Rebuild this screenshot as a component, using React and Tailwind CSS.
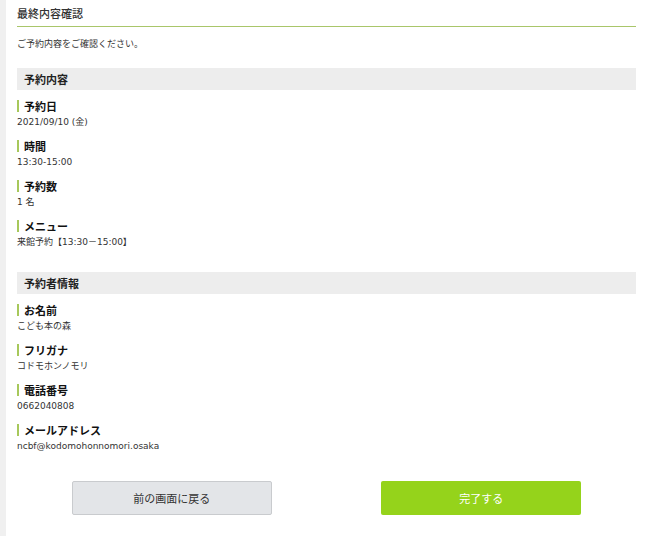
const font = { fontFamily: '"Noto Sans CJK JP", "Noto Sans", sans-serif' };
const valueFont = { fontFamily: '"DejaVu Sans", "Noto Sans CJK JP", sans-serif' };

const sections = [
  {
    title: '予約内容',
    fields: [
      ['予約日', '2021/09/10 (金)'],
      ['時間', '13:30-15:00'],
      ['予約数', '1 名'],
      ['メニュー', '来館予約【13:30－15:00】'],
    ],
  },
  {
    title: '予約者情報',
    fields: [
      ['お名前', 'こども本の森'],
      ['フリガナ', 'コドモホンノモリ'],
      ['電話番号', '0662040808'],
      ['メールアドレス', 'ncbf@kodomohonnomori.osaka'],
    ],
  },
];

function Field({ label, value }) {
  return (
    <div className="mt-[8px]">
      <div className="flex items-center h-[16px]">
        <span className="w-[2px] h-[12px] bg-[#a7c85b] mr-[5px]" />
        <span className="text-[11px] leading-[16px] font-bold text-[#111]">{label}</span>
      </div>
      <div className="mt-[1px] text-[9px] leading-[14px] text-[#333]" style={valueFont}>
        {value}
      </div>
      <div className="h-[1px]" />
    </div>
  );
}

export default function App() {
  return (
    <div className="flex h-[536px] w-[646px] bg-white" style={font}>
      <div className="w-[6px] bg-[#f0f0f0]" />
      <div className="flex-1 pl-[11px] pr-[10px]">
        <div className="pt-[5px] pb-[5px] border-b border-[#a9c66a]">
          <h1 className="text-[11px] leading-[16px] font-medium text-[#333]">最終内容確認</h1>
        </div>
        <p className="mt-[10px] text-[9px] leading-[14px] text-[#333]">ご予約内容をご確認ください。</p>

        {sections.map((s, i) => (
          <div key={s.title} className={i === 0 ? 'mt-[17px]' : 'mt-[22px]'}>
            <div className="h-[22px] bg-[#ededed] px-[7px] text-[11px] leading-[22px] font-bold text-[#222]">
              {s.title}
            </div>
            {s.fields.map(([l, v]) => (
              <Field key={l} label={l} value={v} />
            ))}
          </div>
        ))}

        <div className="grid grid-cols-2 mt-[27px]">
          <div className="flex justify-center">
            <button className="w-[200px] h-[34px] bg-[#e3e5e8] border border-[#c9cbce] rounded-[2px] text-[11px] text-[#333]">
              前の画面に戻る
            </button>
          </div>
          <div className="flex justify-center">
            <button className="w-[200px] h-[34px] bg-[#95d31b] rounded-[2px] text-[11px] text-white">
              完了する
            </button>
          </div>
        </div>
      </div>
    </div>
  );
}
